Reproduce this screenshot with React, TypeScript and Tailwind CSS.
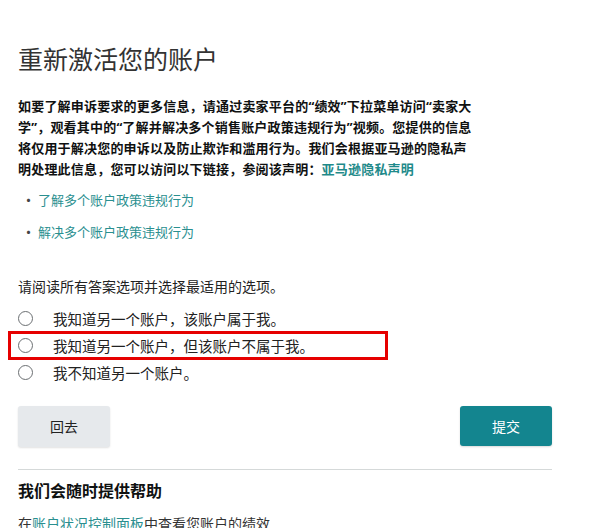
export default function App() {
  const options = [
    '我知道另一个账户，该账户属于我。',
    '我知道另一个账户，但该账户不属于我。',
    '我不知道另一个账户。',
  ]

  return (
    <div className="w-[603px] h-[528px] overflow-hidden bg-white pl-[18px] font-['Noto_Sans_CJK_SC','Noto_Sans',sans-serif] text-[#0f1111]">
      <div className="w-[534px]">
        <h1 className="pt-[40px] text-[25px] font-normal leading-[36px] text-[#333]">重新激活您的账户</h1>

        {/* latin font first so the quote marks come out narrow like the original */}
        <p className="mt-[20px] font-['Noto_Sans','Noto_Sans_CJK_SC',sans-serif] text-[13px] font-bold leading-[21px] tracking-[0.2px]">
          如要了解申诉要求的更多信息，请通过卖家平台的“绩效”下拉菜单访问“卖家大
          <br />
          学”，观看其中的“了解并解决多个销售账户政策违规行为”视频。您提供的信息
          <br />
          将仅用于解决您的申诉以及防止欺诈和滥用行为。我们会根据亚马逊的隐私声
          <br />
          明处理此信息，您可以访问以下链接，参阅该声明：
          <span className="text-[#1f8a8a]">亚马逊隐私声明</span>
        </p>

        <ul className="mt-[10px] text-[13px] leading-[20px]">
          <li className="flex items-center">
            <span className="w-[20px] pl-[3px] text-[15px] text-[#444]">•</span>
            <span className="text-[#2a8f8f]">了解多个账户政策违规行为</span>
          </li>
          <li className="mt-[12px] flex items-center">
            <span className="w-[20px] pl-[3px] text-[15px] text-[#444]">•</span>
            <span className="text-[#2a8f8f]">解决多个账户政策违规行为</span>
          </li>
        </ul>

        <p className="mt-[34px] text-[14px] leading-[20px] text-[#222]">请阅读所有答案选项并选择最适用的选项。</p>

        <div className="mt-[9px] flex flex-col">
          {options.map((label, i) => (
            <div key={label} className="relative flex h-[27px] items-center">
              {i === 1 && (
                <div className="absolute left-[-10px] top-[-1px] h-[29px] w-[380px] border-[3px] border-[#e60000]" />
              )}
              <span className="h-[15px] w-[15px] rounded-full border border-[#6b6f72] bg-white" />
              <span className="ml-[20px] text-[14.5px] text-[#222]">{label}</span>
            </div>
          ))}
        </div>

        <div className="mt-[20px] flex justify-between">
          <button className="h-[41px] w-[92px] rounded-[3px] bg-[#e6e9ec] text-[14px] text-[#222] shadow-[0_1px_2px_rgba(0,0,0,0.12)]">
            回去
          </button>
          <button className="h-[40px] w-[92px] rounded-[3px] bg-[#13858f] text-[14px] text-white shadow-[0_1px_2px_rgba(0,0,0,0.15)]">
            提交
          </button>
        </div>

        <div className="mt-[22px] h-px bg-[#d5d9d9]" />

        <h2 className="mt-[8px] text-[16px] font-bold leading-[24px]">我们会随时提供帮助</h2>

        <p className="mt-[11px] text-[14px] leading-[20px] text-[#333]">
          在<span className="text-[#2a8f8f]">账户状况控制面板</span>中查看您账户的绩效
        </p>
      </div>
    </div>
  )
}
